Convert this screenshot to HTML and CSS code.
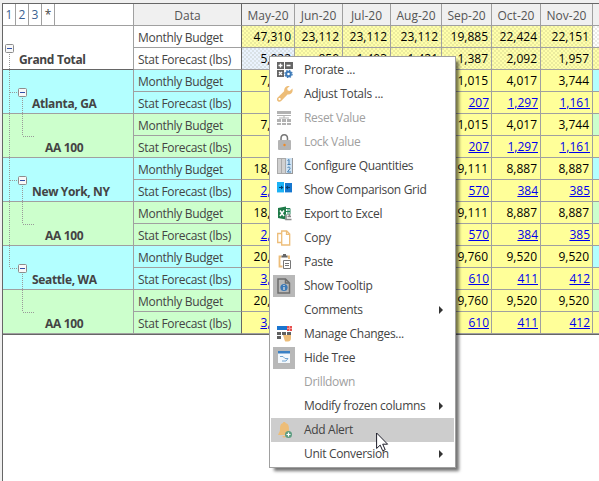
FILE: index.html
```
<!DOCTYPE html>
<html lang="en">
<head>
  <meta charset="UTF-8">
  <title>Demand Forecast</title>
  <link rel="stylesheet" href="styles.css">
</head>
<body>
  <table class="grid">
    <colgroup>
      <col class="c-tree"><col class="c-data"><col class="c-may"><col class="c-jun"><col class="c-jul"><col class="c-aug"><col class="c-sep"><col class="c-oct"><col class="c-nov"><col>
    </colgroup>
    <thead>
      <tr>
        <th class="levels"><div><span>1</span><span>2</span><span>3</span><span>*</span></div></th>
        <th class="split">Data</th><th>May-20</th><th>Jun-20</th><th>Jul-20</th><th>Aug-20</th><th>Sep-20</th><th>Oct-20</th><th>Nov-20</th><th></th>
      </tr>
    </thead>
    <tbody id="rows"></tbody>
  </table>

  <!-- Context menu -->
  <ul class="menu">
    <li>
      <svg class="icon" viewBox="0 0 16 16"><path fill="#666" d="M0 0h7v7H0zM8 0h8v7H8zM0 8h7v7H0z"/><path stroke="#fff" stroke-width="1.3" fill="none" d="M3.500 1.500v4M1.500 3.500h4M9.500 3.500h4M2 10l3 3M5 10l-3 3"/><circle cx="11.500" cy="12" r="2.300" fill="none" stroke="#3d7ab8" stroke-width="2"/><circle cx="11.500" cy="12" r="3.600" fill="none" stroke="#3d7ab8" stroke-width="1.200" stroke-dasharray="1.500 1.330"/></svg>
      Prorate ...
    </li>
    <li>
      <svg class="icon" viewBox="0 0 16 16"><path fill="#edbd78" d="M15.400 2.500l-2.700 2.600-2-.5-.5-2L12.800 0C10-.6 6.800 1.300 7.100 5.200L.7 11.600c-2.400 2.500 1.300 5.600 3.500 3.400l6.300-6.500c3.600.5 6-2.600 4.900-6zM3.600 13.600a1.100 1.100 0 1 1-1.500-1.500 1.100 1.100 0 0 1 1.500 1.500z"/></svg>
      Adjust Totals ...
    </li>
    <li class="disabled">
      <svg class="icon" viewBox="0 0 16 16"><path fill="#b2b2b2" d="M0 1h14v3H0zM0 5h14v1H0zM6.500 6h1v2h-1zM2 7.500h10v1H2zM0 9h4v3H0zM5 9h4v3H5zM10 9h4v3h-4zM0 13h4v2H0zM5 13h4v2H5zM10 13h4v2h-4z"/></svg>
      Reset Value
    </li>
    <li class="disabled">
      <svg class="icon" viewBox="0 0 16 16"><path fill="none" stroke="#777" stroke-width="1.500" d="M4 7V4.500C4-.5 10.500-.5 10.500 4.500V7"/><rect x="1" y="6" width="13" height="10" rx="1" fill="#b4b4b4"/><circle cx="7.500" cy="11" r="1.200" fill="#f08a24"/></svg>
      Lock Value
    </li>
    <li>
      <svg class="icon" viewBox="0 0 16 16"><path fill="#d0d0d0" d="M0 0h9v16H0z"/><path stroke="#aaa" fill="none" d="M.5 0v16M4.500 0v16M8.500 0v16M0 .5h9M0 15.500h9"/><path fill="#cfe2f2" d="M9 0h7v16H9z"/><path fill="none" stroke="#427db0" d="M10.500 2.500l1.500-1v5M10.500 6.500h3M10.500 10c.5-1.500 3-1 2.500.5L10.500 14h3.500"/><path stroke="#999" d="M15.500 0v16M9 15.500h7"/></svg>
      Configure Quantities
    </li>
    <li>
      <svg class="icon" viewBox="0 0 16 16"><path fill="#1cb2f5" d="M0 0h7v10H0z"/><path fill="#1677cf" d="M8 1h7v9H8z"/><path fill="#9fdcf9" d="M0 10h7v1H0z"/><path fill="#a3cbee" d="M8 10h7v1H8z"/><path fill="#063e70" d="M2 5h2V3.500L6.500 5.500 4 7.500V6H2zM13 5h-2V3.500L8.500 5.500l2.500 2V6h2z"/></svg>
      Show Comparison Grid
    </li>
    <li>
      <svg class="icon" viewBox="0 0 16 16"><path fill="#fff" stroke="#27855a" d="M8 2.500h5v6H8zM8 5.500h5M11 3v6"/><path fill="#1f7a48" d="M1 2l8-1.500v13L1 12z"/><path stroke="#fff" stroke-width="1.500" d="M3 4.500l4 5.500M7 4.500L3 10"/><path fill="#fff" d="M8.500 8.500h7v7h-7z"/><path stroke="#888" stroke-width="1.600" fill="none" d="M9 9v4.500h5.500M12.500 8v3M10.500 10.500h3.500"/></svg>
      Export to Excel
    </li>
    <li>
      <svg class="icon" viewBox="0 0 16 16"><path fill="#fff" stroke="#edbd78" stroke-width="1.300" d="M.7 3.500h7v9h-7z"/><path fill="#fff" stroke="#edbd78" stroke-width="1.300" d="M4.700 1h5l3 3v11h-8zM9.500 1v3.300h3.200"/></svg>
      Copy
    </li>
    <li>
      <svg class="icon" viewBox="0 0 16 16"><path fill="none" stroke="#edbd78" stroke-width="1.800" d="M4.500 2.500H2.500V12.500h3M10.500 2.500H12V5"/><path fill="#666" d="M4.500 3.500V1.500H6V0h3v1.500h1.500v2z"/><path fill="#fff" stroke="#777" d="M6.500 6.500h7v8h-7z"/><path stroke="#777" d="M8 9.500h4M8 11.500h4"/></svg>
      Paste
    </li>
    <li>
      <span class="checked"><svg class="icon" viewBox="0 0 16 16"><path fill="none" stroke="#6c6c6c" stroke-width="1.500" d="M2 1h7.500l4 4v10H2zM9.500 1v4h4"/><circle cx="8" cy="9.500" r="3.600" fill="#3d7ab8"/><path stroke="#ddd" stroke-width="1.300" d="M8 7v1M8 9v3"/></svg></span>
      Show Tooltip
    </li>
    <li class="sub">Comments</li>
    <li>
      <svg class="icon" viewBox="0 0 16 16"><path fill="#1a75cf" d="M0 0h10v4H0z"/><path fill="#606060" d="M0 6h4v3H0zM5 6h4v3H5zM10 6h4v3h-4zM0 10h4v3H0z"/><path fill="#e65050" d="M10 0h5v5h-5z"/><path stroke="#f59b9b" d="M10 2.500h5M12.500 0v5"/><path fill="#edbd78" d="M6 9h8v3c0 2-1 3.500-3 3.500H8z"/><path fill="#fff" d="M6 13l2.500 3H6z"/></svg>
      Manage Changes...
    </li>
    <li>
      <span class="checked"><svg class="icon" viewBox="0 0 16 16"><path fill="#f3f8fc" d="M2 2h12v11H2z"/><path fill="#3a80c4" d="M2 1h12v2.500H2z"/><path fill="none" stroke="#72a5d1" d="M4 6.500h3l2 2h3M6 11h4l2-2.500"/></svg></span>
      Hide Tree
    </li>
    <li class="disabled">Drilldown</li>
    <li class="sub">Modify frozen columns</li>
    <li class="active">
      <svg class="icon" viewBox="0 0 16 16"><path fill="#edbd78" d="M6 1c0-1.500 2.500-1.500 2.500 0C12 2 12 5 12 8c0 2 1.500 3 2 5H1c.5-2 2-3 2-5 0-3 0-6 3-7zM5.500 14h3.500c0 2-3.500 2-3.500 0z"/><circle cx="11.500" cy="12.500" r="3.500" fill="#5c9c80"/><path stroke="#fff" stroke-width="1.200" d="M9.500 12.500h4M11.500 10.500v4"/></svg>
      Add Alert
    </li>
    <li class="sub">Unit Conversion</li>
  </ul>

  <svg class="cursor" viewBox="0 0 13 20"><path fill="#fff" stroke="#1c1c28" d="M.6 1v15.500l3.600-3.400 2.500 5.700 2.500-1.100-2.500-5.500h4.900z"/></svg>

  <script src="grid.js"></script>
</body>
</html>
```
FILE: styles.css
```
body {
  margin: 0;
  padding: 3px 0 0 2px;
  width: 597px;
  height: 478px;
  overflow: hidden;
  background: #f0f0f0;
  font-family: "Open Sans", "Noto Sans", sans-serif;
  font-size: 12px;
  color: #444;
}
body::before {
  content: "";
  position: absolute;
  z-index: -1;
  left: 2px;
  top: 3px;
  right: 0;
  bottom: 0;
  background: #fff;
  border-left: 1px solid #666;
}

/* Grid */
.grid {
  table-layout: fixed;
  border-collapse: separate;
  border-spacing: 0;
  width: 621px;
  border-top: 1px solid #666;
  border-left: 1px solid #666;
  border-bottom: 1px solid #666;
}
.c-tree { width: 131px; }
.c-data { width: 108px; }
.c-may { width: 53px; }
.c-jun { width: 48px; }
.c-jul { width: 48px; }
.c-aug { width: 51px; }
.c-sep { width: 50px; }
.c-oct { width: 49px; }
.c-nov { width: 52px; }
th, td {
  box-sizing: border-box;
  height: 22px;
  padding: 0;
  border-right: 1px solid #a0a0a0;
  border-bottom: 1px solid #a0a0a0;
  line-height: 21px;
  white-space: nowrap;
  overflow: hidden;
}
th {
  padding-top: 2px;
  background: #f0f0f0;
  font-weight: normal;
  line-height: 19px;
  color: #555;
}
th.levels {
  padding-top: 0;
  background: #fff;
}
.levels div {
  display: flex;
}
.levels span {
  width: 12px;
  padding-top: 1px;
  border-right: 1px solid #a0a0a0;
  line-height: 20px;
  color: #3a5f90;
}
.levels span:last-child {
  color: #444;
}
.split {
  border-right-color: #666;
}
.name {
  position: relative;
  vertical-align: bottom;
  font-weight: bold;
  line-height: 19px;
  letter-spacing: -0.35px;
}
.name svg {
  position: absolute;
  left: 0;
  top: 0;
  width: 60px;
  height: 44px;
}
.dots {
  fill: none;
  stroke: #999;
  stroke-dasharray: 1 1;
}
.box {
  fill: #f8f8f8;
  stroke: #8c8c8c;
}
.minus {
  stroke: #3050a8;
}
.level0 { padding-left: 16px; }
.level1 { padding-left: 29px; }
.level2 { padding-left: 42px; }
.total .name {
  border-bottom-color: #666;
}
.label {
  padding: 2px 0 0 4px;
  line-height: 19px;
  letter-spacing: -0.3px;
}
.num {
  padding-right: 3px;
  background: #ffff99;
  text-align: right;
  color: #000;
}
.num.link {
  padding-right: 2px;
}
.label + .num.link {
  padding-right: 3px;
}
.num a {
  color: #0000ee;
  text-decoration: underline;
}
.region td:not(.num) { background: #b3ffff; }
.item td:not(.num) { background: #ccffcc; }

/* diagonal dots on the total row */
.total .num, .total .rest {
  background-image: radial-gradient(circle at 1px 1px, rgba(120, 120, 90, 0.22) 0.6px, transparent 0.9px), radial-gradient(circle at 3px 3px, rgba(120, 120, 90, 0.22) 0.6px, transparent 0.9px);
  background-size: 4px 4px;
}
.total .num {
  background-color: #ffffaa;
}
.total .num.selected {
  background-color: #eaf3fe;
}

/* Context menu */
.menu {
  position: absolute;
  left: 269px;
  top: 56px;
  box-sizing: border-box;
  width: 187px;
  margin: 0;
  padding: 1px;
  list-style: none;
  background: #fff;
  border: 1px solid #a0a0a0;
  box-shadow: 4px 4px 3px -1px rgba(0, 0, 0, 0.55);
  letter-spacing: -0.32px;
}
.menu li {
  position: relative;
  height: 24px;
  padding-left: 33px;
  line-height: 24px;
  white-space: nowrap;
}
.menu .icon {
  position: absolute;
  left: 6px;
  top: 4px;
  width: 16px;
  height: 16px;
}
.menu .checked {
  position: absolute;
  left: 2px;
  top: 1px;
  width: 22px;
  height: 22px;
  background: #b8b8b8;
}
.menu .checked .icon {
  left: 3px;
  top: 3px;
}
.menu .disabled {
  color: #a0a0a0;
}
.menu .active {
  background: #cdcdcd;
}
.menu .sub::after {
  content: "";
  position: absolute;
  right: 11px;
  top: 8px;
  border: 4px solid transparent;
  border-left-color: #333;
  border-right: 0;
}
.cursor {
  position: absolute;
  left: 376px;
  top: 432px;
  width: 13px;
  height: 20px;
}
```
FILE: grid.js
```
const groups = [
  { name: 'Grand Total', level: 0, type: 'total',
    budget: ['47,310', '23,112', '23,112', '23,112', '19,885', '22,424', '22,151'],
    stat: ['5,022', '850', '1,403', '1,421', '1,387', '2,092', '1,957'] },
  { name: 'Atlanta, GA', level: 1, type: 'region',
    budget: ['7,560', '', '', '', '1,015', '4,017', '3,744'],
    stat: ['', '', '', '', '207', '1,297', '1,161'] },
  { name: 'AA 100', level: 2, type: 'item',
    budget: ['7,560', '', '', '', '1,015', '4,017', '3,744'],
    stat: ['', '', '', '', '207', '1,297', '1,161'] },
  { name: 'New York, NY', level: 1, type: 'region',
    budget: ['18,900', '', '', '', '9,111', '8,887', '8,887'],
    stat: ['2,100', '', '', '', '570', '384', '385'] },
  { name: 'AA 100', level: 2, type: 'item',
    budget: ['18,900', '', '', '', '9,111', '8,887', '8,887'],
    stat: ['2,100', '', '', '', '570', '384', '385'] },
  { name: 'Seattle, WA', level: 1, type: 'region',
    budget: ['20,850', '', '', '', '9,760', '9,520', '9,520'],
    stat: ['3,100', '', '', '', '610', '411', '412'] },
  { name: 'AA 100', level: 2, type: 'item',
    budget: ['20,850', '', '', '', '9,760', '9,520', '9,520'],
    stat: ['3,100', '', '', '', '610', '411', '412'] }
];

function toggle(x) {
  return `<rect class="box" x="${x + 0.5}" y="18.5" width="8" height="8" rx="1"/><path class="minus" d="M${x + 2} 22.5h5"/>`;
}

function treeLines(group, index) {
  if (group.level === 0) {
    return `<path class="dots" d="M6.5 28v16"/>` + toggle(2);
  }
  // the trunk ends at the last region
  const end = index < 5 ? 44 : 22;
  const trunk = index < 6 ? `M6.5 0v${end}` : '';
  if (group.level === 1) {
    return `<path class="dots" d="${trunk}M7 22.5h8M19.5 28v16"/>` + toggle(15);
  }
  return `<path class="dots" d="${trunk}M19.5 0v22M20 22.5h12"/>`;
}

function numbers(values, isStat, group) {
  return values.map((v, i) => {
    const link = isStat && group.level > 0 && v;
    const selected = isStat && group.level === 0 && i === 0;
    return `<td class="num${link ? ' link' : ''}${selected ? ' selected' : ''}">${link ? `<a>${v}</a>` : v}</td>`;
  }).join('');
}

document.getElementById('rows').innerHTML = groups.map((g, i) => `
  <tr class="${g.type}">
    <td class="name level${g.level}" rowspan="2"><svg>${treeLines(g, i)}</svg>${g.name}</td>
    <td class="label split">Monthly Budget</td>${numbers(g.budget, false, g)}<td class="rest"></td>
  </tr>
  <tr class="${g.type}">
    <td class="label split">Stat Forecast (lbs)</td>${numbers(g.stat, true, g)}<td class="num"></td>
  </tr>`).join('');
```
